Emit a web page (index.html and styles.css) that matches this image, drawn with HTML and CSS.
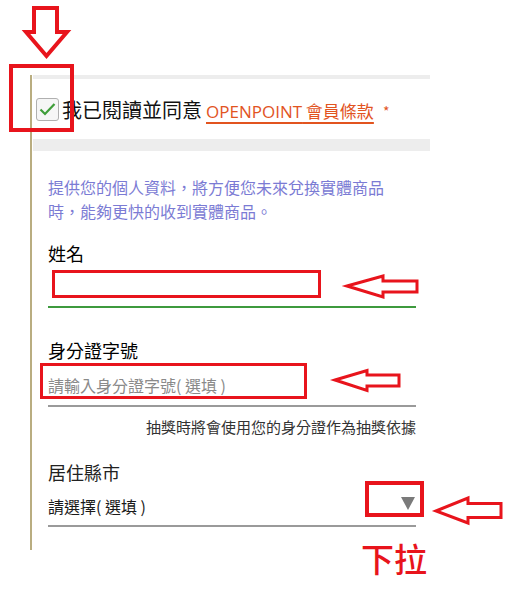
FILE: index.html
```html
<!DOCTYPE html>
<html lang="zh-Hant">
<head>
    <meta charset="UTF-8">
    <meta name="viewport" content="width=device-width, initial-scale=1.0">
    <title>會員資料</title>
    <link rel="stylesheet" href="styles.css">
</head>
<body>

    <div class="page">
        <div class="panel">
            <div class="agree-band">
                <label class="agree-row">
                    <span class="check-box">
                        <svg width="17" height="14" viewBox="0 0 17 14"><path d="M1.5 7.5 L6 12 L15.5 2" fill="none" stroke="#3f9e3a" stroke-width="2.2"/></svg>
                    </span>
                    <span class="agree-text">我已閱讀並同意</span>
                    <a class="terms-link" href="#"><span class="latin">OPENPOINT</span> 會員條款</a>
                    <span class="required">*</span>
                </label>
            </div>

            <div class="form-body">
                <p class="intro">提供您的個人資料，將方便您未來兌換實體商品時，能夠更快的收到實體商品。</p>

                <div class="field field-name">
                    <div class="field-label">姓名</div>
                    <div class="field-input active"></div>
                </div>

                <div class="field field-id">
                    <div class="field-label">身分證字號</div>
                    <div class="field-input">
                        <span class="placeholder">請輸入身分證字號( 選填 )</span>
                    </div>
                    <div class="field-hint">抽獎時將會使用您的身分證作為抽獎依據</div>
                </div>

                <div class="field field-city">
                    <div class="field-label light">居住縣市</div>
                    <div class="field-input select">
                        <span class="select-value">請選擇( 選填 )</span>
                        <span class="select-caret"></span>
                    </div>
                </div>
            </div>
        </div>

        <!-- annotation layer drawn over the form -->
        <svg class="marks" width="516" height="600" viewBox="0 0 516 600">
            <g fill="none" stroke="#e8141c" stroke-linejoin="miter">
                <polygon points="34,8 57,8 57,32 67,32 46.5,56 26,32 34,32" stroke-width="4"/>
                <rect x="11" y="66" width="61" height="64" stroke-width="4"/>
                <rect x="53.5" y="271.5" width="266" height="25" stroke-width="3"/>
                <polygon points="347,286 383,276 383,281 417,281 417,292 383,292 383,297" stroke-width="3"/>
                <rect x="41.5" y="364.5" width="264" height="33" stroke-width="3"/>
                <polygon points="335,380 367,370.5 367,375 399,375 399,386 367,386 367,390.5" stroke-width="3"/>
                <rect x="367" y="483" width="55" height="32" stroke-width="4"/>
                <polygon points="436,511 468,498 468,503.5 501,503.5 501,517.5 468,517.5 468,523" stroke-width="3"/>
            </g>
        </svg>
        <div class="mark-label">下拉</div>
    </div>

</body>
</html>
```

FILE: styles.css
```css
    body {
        margin: 0;
        background: #fff;
        font-family: "Noto Sans CJK TC", "Noto Sans", sans-serif;
        color: #1a1a1a;
    }

    .page {
        position: relative;
        width: 516px;
        height: 600px;
        padding-top: 75px;
        box-sizing: border-box;
    }

    .panel {
        margin-left: 30px;
        width: 400px;
        height: 475px;
        border-left: 2px solid #b9ad80;
        box-sizing: border-box;
    }

    .agree-band {
        border-top: 4px solid #ededed;
        border-bottom: 12px solid #ededed;
        margin-left: 1px;
    }

    .agree-row {
        display: flex;
        align-items: center;
        height: 60px;
        padding-left: 3px;
    }

    .check-box {
        width: 21px;
        height: 21px;
        border: 1px solid #b0b0b0;
        border-radius: 3px;
        background: #f6f6f6;
        display: flex;
        align-items: center;
        justify-content: center;
    }

    .agree-text {
        margin-left: 3px;
        font-size: 20px;
        line-height: 26px;
        color: #111;
        padding-top: 2px;
    }

    .terms-link {
        margin-left: 4px;
        font-size: 17px;
        line-height: 22px;
        color: #e2541f;
        text-decoration: underline;
        text-underline-offset: 4px;
        text-decoration-thickness: 2px;
        padding-top: 4px;
    }

    .terms-link .latin {
        font-family: "Open Sans", sans-serif;
    }

    .required {
        margin-left: 9px;
        color: #e2541f;
        font-size: 14px;
        padding-top: 4px;
    }

    .form-body {
        padding: 24px 14px 0 16px;
    }

    .intro {
        margin: 0;
        width: 350px;
        font-size: 16px;
        line-height: 24px;
        color: #7b7bd4;
    }

    .field-label {
        font-size: 18px;
        line-height: 26px;
        color: #000;
    }

    .field-label.light {
        color: #222;
    }

    .field-name {
        margin-top: 17px;
    }

    .field-id {
        margin-top: 29px;
    }

    .field-city {
        margin-top: 22px;
    }

    .field-input {
        height: 40px;
        border-bottom: 2px solid #9a9a9a;
        display: flex;
        align-items: center;
    }

    .field-input.active {
        border-bottom-color: #3e9a3e;
    }

    .field-id .field-input {
        height: 42px;
    }

    .placeholder {
        font-size: 16px;
        color: #8a8a8a;
        padding-top: 2px;
    }

    .field-hint {
        margin-top: 10px;
        text-align: right;
        font-size: 15px;
        line-height: 20px;
        color: #333;
    }

    .select {
        justify-content: space-between;
        padding-right: 1px;
    }

    .select-value {
        font-size: 16px;
        color: #1a1a1a;
        padding-top: 2px;
    }

    .select-caret {
        width: 0;
        height: 0;
        border-left: 7px solid transparent;
        border-right: 7px solid transparent;
        border-top: 13px solid #7a7a7a;
        margin-top: -4px;
    }

    .marks {
        position: absolute;
        left: 0;
        top: 0;
        pointer-events: none;
    }

    .mark-label {
        position: absolute;
        left: 361px;
        top: 538px;
        font-size: 33px;
        line-height: 40px;
        color: #e8141c;
        font-weight: 500;
    }
```
